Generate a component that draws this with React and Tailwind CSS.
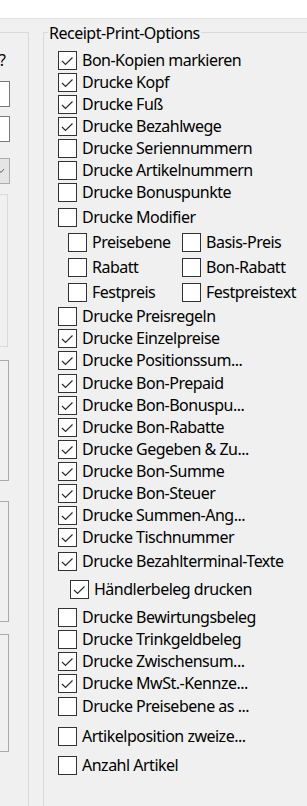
import React from 'react'

// Receipt-Print-Options dialog section (Windows-style group box with checkboxes)
const rows = [
  { label: 'Bon-Kopien markieren', checked: true, mt: '' },
  { label: 'Drucke Kopf', checked: true, mt: '' },
  { label: 'Drucke Fuß', checked: true, mt: '' },
  { label: 'Drucke Bezahlwege', checked: true, mt: '' },
  { label: 'Drucke Seriennummern', checked: false, mt: '' },
  { label: 'Drucke Artikelnummern', checked: false, mt: '' },
  { label: 'Drucke Bonuspunkte', checked: false, mt: '' },
  { label: 'Drucke Modifier', checked: false, mt: 'mt-[3px]' },
  { pair: ['Preisebene', 'Basis-Preis'], mt: 'mt-[3px]' },
  { pair: ['Rabatt', 'Bon-Rabatt'], mt: 'mt-[3px]' },
  { pair: ['Festpreis', 'Festpreistext'], mt: 'mt-[3px]' },
  { label: 'Drucke Preisregeln', checked: false, mt: 'mt-[2px]' },
  { label: 'Drucke Einzelpreise', checked: true, mt: '' },
  { label: 'Drucke Positionssum...', checked: true, mt: '' },
  { label: 'Drucke Bon-Prepaid', checked: true, mt: 'mt-[1px]' },
  { label: 'Drucke Bon-Bonuspu...', checked: true, mt: '' },
  { label: 'Drucke Bon-Rabatte', checked: true, mt: '' },
  { label: 'Drucke Gegeben & Zu...', checked: true, mt: '' },
  { label: 'Drucke Bon-Summe', checked: true, mt: '' },
  { label: 'Drucke Bon-Steuer', checked: true, mt: '' },
  { label: 'Drucke Summen-Ang...', checked: true, mt: '' },
  { label: 'Drucke Tischnummer', checked: true, mt: '' },
  { label: 'Drucke Bezahlterminal-Texte', checked: true, mt: 'mt-[2px]' },
  { label: 'Händlerbeleg drucken', checked: true, mt: 'mt-[6px]', indent: true },
  { label: 'Drucke Bewirtungsbeleg', checked: false, mt: 'mt-[6px]' },
  { label: 'Drucke Trinkgeldbeleg', checked: false, mt: '' },
  { label: 'Drucke Zwischensum...', checked: true, mt: '' },
  { label: 'Drucke MwSt.-Kennze...', checked: true, mt: '' },
  { label: 'Drucke Preisebene as ...', checked: false, mt: 'mt-[1px]' },
  { label: 'Artikelposition zweize...', checked: false, mt: 'mt-[8px]' },
  { label: 'Anzahl Artikel', checked: false, mt: 'mt-[7px]' },
]

const CheckBox = ({ checked }) => (
  <div className="w-[19px] h-[19px] shrink-0 border border-[#333333] bg-white flex items-center justify-center">
    {checked && (
      <svg width="17" height="17" viewBox="0 0 17 17">
        <polyline points="3,9 6.5,12.5 13.5,5.5" fill="none" stroke="#2a2a2a" strokeWidth="1.2" />
      </svg>
    )}
  </div>
)

const Option = ({ label, checked, className = '' }) => (
  <div className={`flex items-center gap-[5px] h-[22px] ${className}`}>
    <CheckBox checked={checked} />
    <span className="whitespace-nowrap">{label}</span>
  </div>
)

export default function App() {
  return (
    <div
      className="w-[307px] h-[806px] overflow-hidden bg-[#f0f0f0] flex flex-col text-[16px] tracking-[-0.5px] text-black"
      style={{ fontFamily: '"Noto Sans", "Open Sans", sans-serif' }}
    >
      <div className="h-[19px] shrink-0 bg-white border-b border-[#e3e3e3]" />

      <div className="flex flex-1 min-h-0">
        {/* left group box, cut off at the window edge */}
        <div className="w-[29px] shrink-0 mt-[13px] border-t border-r border-[#d9d9d9] flex flex-col">
          <div className="h-[22px] mt-[16px] flex items-center leading-none -ml-[1px]">?</div>
          <div className="w-[10px] h-[26px] mt-[10px] bg-white border-y border-r border-[#7a7a7a]" />
          <div className="w-[10px] h-[26px] mt-[9px] bg-white border-y border-r border-[#7a7a7a]" />
          <div className="w-[10px] h-[26px] mt-[16px] bg-[#e5e5e5] border-y border-r border-[#adadad] flex items-center">
            <svg width="8" height="8" viewBox="0 0 8 8" className="-ml-[2px]">
              <polyline points="0,2 3,5.5 6,2" fill="none" stroke="#606060" strokeWidth="1" />
            </svg>
          </div>
          <div className="w-[8px] h-[153px] mt-[10px] border-y border-r border-[#dadada]" />
          <div className="w-[9px] h-[121px] mt-[13px] border-y border-r border-[#a9a9a9]" />
          <div className="w-[9px] h-[121px] mt-[20px] border-y border-r border-[#a9a9a9]" />
          <div className="w-[9px] h-[118px] mt-[12px] border-y border-r border-[#a9a9a9]" />
        </div>

        {/* Receipt-Print-Options group box */}
        <div className="flex-1 ml-[14px] mt-[13px] border-t border-l border-[#d9d9d9] flex flex-col">
          <div className="-mt-[10px] ml-[4px] px-[1px] w-fit h-[20px] leading-[20px] bg-[#f0f0f0] whitespace-nowrap">
            Receipt-Print-Options
          </div>
          <div className="mt-[6px] flex flex-col">
            {rows.map((row, i) =>
              row.pair ? (
                <div key={i} className={`flex h-[22px] pl-[24px] ${row.mt}`}>
                  <Option label={row.pair[0]} checked={false} className="w-[114px]" />
                  <Option label={row.pair[1]} checked={false} />
                </div>
              ) : (
                <Option
                  key={i}
                  label={row.label}
                  checked={row.checked}
                  className={`${row.indent ? 'pl-[26px]' : 'pl-[14px]'} ${row.mt}`}
                />
              )
            )}
          </div>
        </div>
      </div>
    </div>
  )
}
